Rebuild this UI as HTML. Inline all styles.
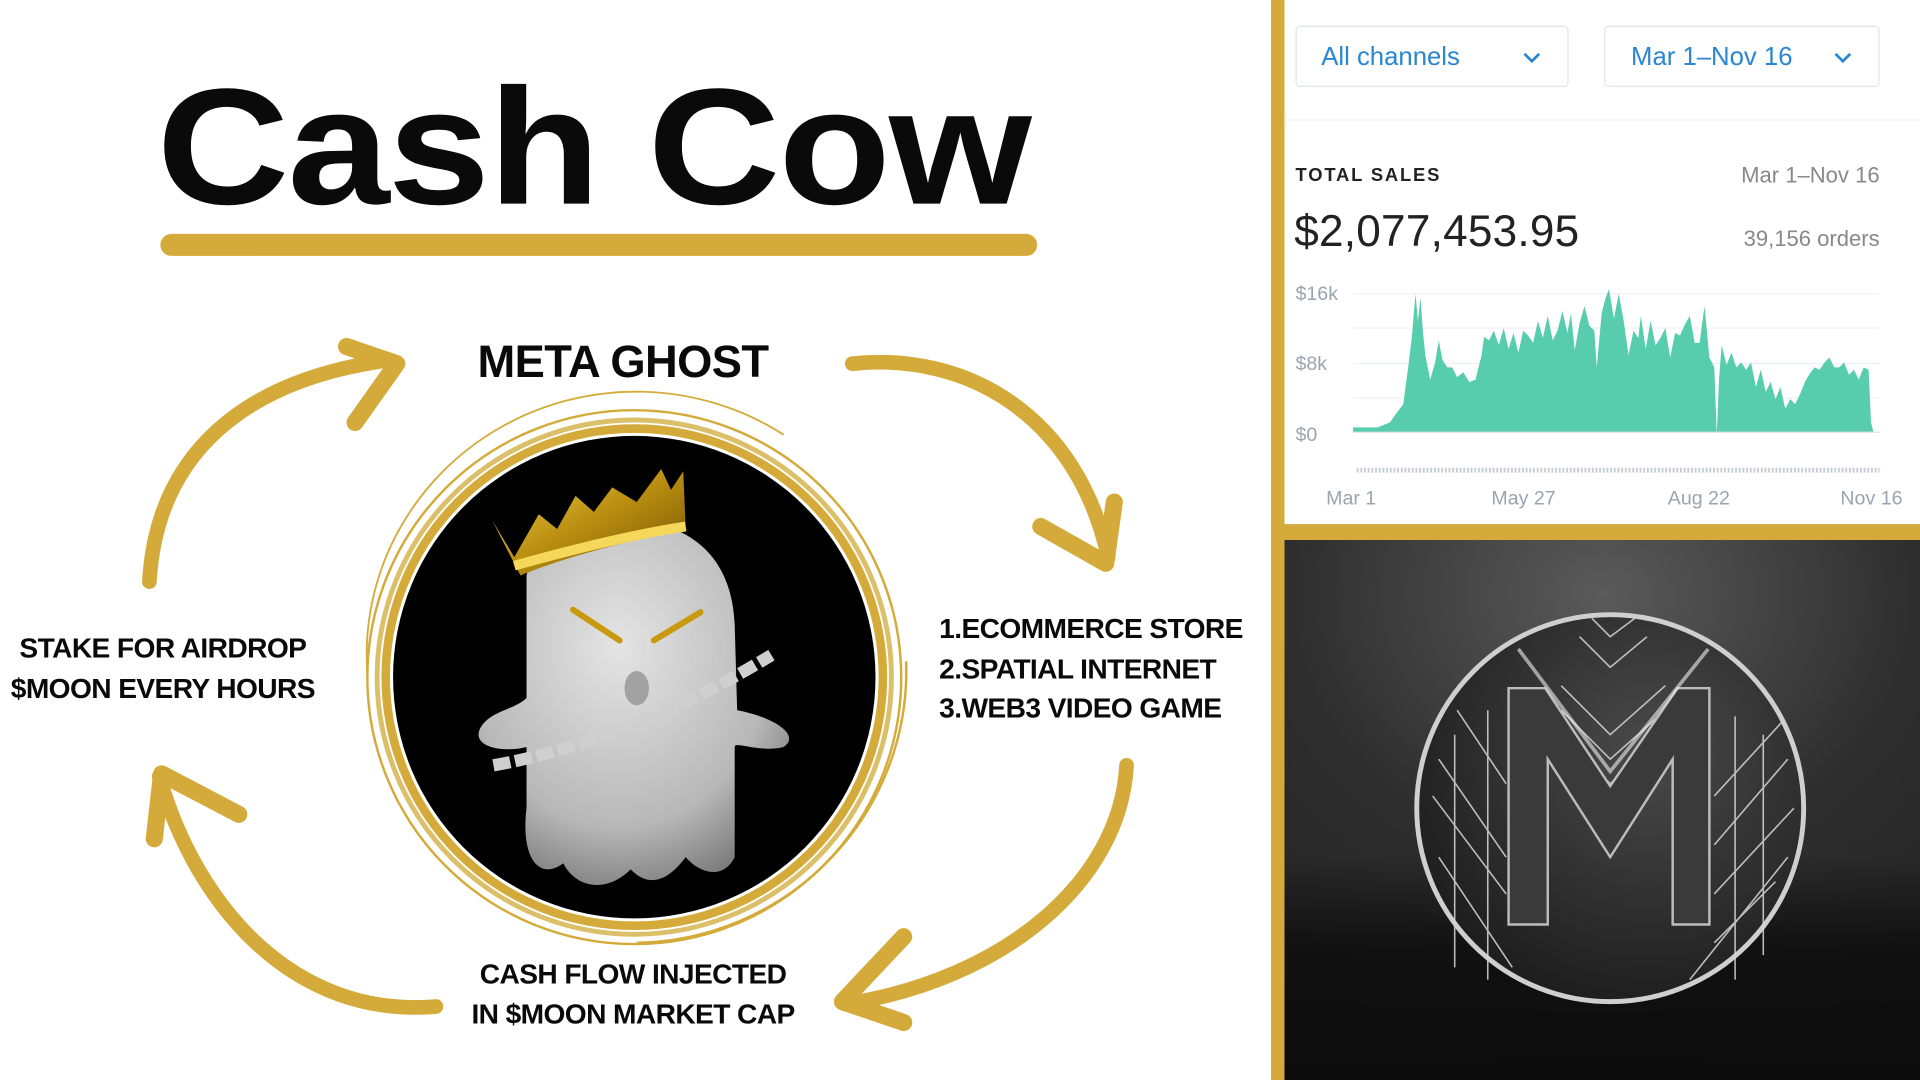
<!DOCTYPE html>
<html><head><meta charset="utf-8"><style>
html,body{margin:0;padding:0;background:#fff;overflow:hidden}
#w{width:1568px;height:882px;position:relative;transform:scale(1.22449);transform-origin:0 0;font-family:"Liberation Sans",sans-serif}
.t{position:absolute;font-weight:900;color:#0a0a0a;white-space:nowrap;letter-spacing:-0.5px}
</style></head><body><div id="w">
<svg width="1568" height="882" style="position:absolute;left:0;top:0">
<defs>
<radialGradient id="bg" cx="0.5" cy="0.1" r="0.9"><stop offset="0" stop-color="#5a5a5a"/><stop offset="0.55" stop-color="#2e2e2e"/><stop offset="1" stop-color="#222"/></radialGradient>
<linearGradient id="fl" x1="0" y1="0" x2="0" y2="1"><stop offset="0" stop-color="#0c0c0c" stop-opacity="0"/><stop offset="0.4" stop-color="#0c0c0c" stop-opacity="0.8"/><stop offset="1" stop-color="#0c0c0c" stop-opacity="1"/></linearGradient>
<radialGradient id="coin" cx="0.6" cy="0.35" r="0.7"><stop offset="0" stop-color="#4a4a4a"/><stop offset="1" stop-color="#1c1c1c"/></radialGradient>
<radialGradient id="gh" cx="0.45" cy="0.35" r="0.7"><stop offset="0" stop-color="#e4e4e4"/><stop offset="0.7" stop-color="#b8b8b8"/><stop offset="1" stop-color="#7a7a7a"/></radialGradient>
<linearGradient id="cr" x1="0" y1="0" x2="1" y2="1"><stop offset="0" stop-color="#f2d34a"/><stop offset="0.5" stop-color="#b98d10"/><stop offset="1" stop-color="#6e5205"/></linearGradient>
<clipPath id="cc"><circle cx="518" cy="553" r="196"/></clipPath>
</defs>
<rect x="1038" y="0" width="11" height="882" fill="#d4ab3a"/>
<rect x="1049" y="428" width="519" height="13" fill="#d4ab3a"/>
<rect x="1049" y="441" width="519" height="441" fill="url(#bg)"/>
<rect x="1049" y="700" width="519" height="182" fill="url(#fl)"/>
<line x1="1049" y1="98" x2="1568" y2="98" stroke="#eceff2"/>
<rect x="1058.5" y="21.5" width="222" height="49" rx="3" fill="#fff" stroke="#e2e6ea"/>
<rect x="1310.5" y="21.5" width="224" height="49" rx="3" fill="#fff" stroke="#e2e6ea"/>
<path d="M1245 44 l6 6 l6 -6 M1499 44 l6 6 l6 -6" stroke="#2a86d0" stroke-width="2.2" fill="none"/>
<g stroke="#eef1f3"><line x1="1105" y1="240" x2="1535" y2="240"/><line x1="1105" y1="268" x2="1535" y2="268"/><line x1="1105" y1="297" x2="1535" y2="297"/><line x1="1105" y1="325" x2="1535" y2="325"/></g>
<polygon fill="#57cdad" points="1105,353 1105,349 1125,349 1135,345 1140,338 1146,330 1150,300 1153,275 1156,240 1158,262 1160,243 1162,270 1164,290 1168,310 1172,296 1175,278 1178,294 1182,300 1186,300 1190,308 1195,304 1200,312 1205,310 1210,290 1212,275 1216,278 1220,270 1224,282 1228,268 1232,285 1236,272 1240,288 1244,270 1248,274 1252,280 1256,262 1260,276 1264,258 1268,278 1272,270 1276,254 1280,272 1283,256 1286,286 1290,264 1294,250 1298,266 1302,270 1304,300 1308,256 1311,244 1314,236 1318,260 1322,240 1326,262 1330,290 1334,270 1338,276 1340,258 1344,285 1348,262 1352,282 1356,276 1360,268 1364,292 1368,272 1372,274 1376,265 1380,258 1384,280 1388,280 1392,250 1396,292 1400,300 1402,355 1404,308 1406,282 1410,298 1414,288 1418,300 1422,296 1426,302 1430,296 1434,316 1438,302 1442,320 1446,312 1450,326 1454,316 1458,334 1462,326 1466,330 1470,322 1474,312 1478,305 1482,300 1486,302 1490,296 1494,292 1498,300 1502,300 1506,296 1510,306 1514,302 1518,310 1522,300 1526,302 1528,345 1530,353"/>
<line x1="1105" y1="353" x2="1535" y2="353" stroke="#dde2e6"/>
<line x1="1108" y1="384" x2="1535" y2="384" stroke="#c5ccd3" stroke-width="4" stroke-dasharray="1.5 1.5"/>
<ellipse cx="1315" cy="660" rx="158" ry="158" fill="url(#coin)" stroke="#cfcfcf" stroke-width="4"/>
<g stroke="#d8d8d8" stroke-width="1.3" fill="none" opacity="0.85">
<path d="M1188 600 L1188 790 M1215 580 L1215 800 M1417 585 L1417 800 M1440 600 L1440 780"/>
<path d="M1170 650 L1230 730 M1175 620 L1230 700 M1175 700 L1235 790 M1190 580 L1230 640"/>
<path d="M1400 650 L1455 590 M1400 690 L1460 620 M1400 730 L1465 660 M1400 770 L1450 720 M1380 800 L1460 700"/>
<path d="M1275 560 L1315 600 L1360 560 M1275 580 L1315 620 L1360 580 M1275 600 L1315 640 L1360 600 M1275 620 L1315 660 L1360 620 M1290 520 L1315 545 L1345 520 M1300 505 L1315 520 L1335 505"/>
</g>
<path d="M1232 562 L1262 562 L1315 642 L1370 562 L1396 562 L1396 755 L1366 755 L1366 620 L1315 700 L1264 620 L1264 755 L1232 755 Z" fill="#3a3a3a" stroke="#bcbcbc" stroke-width="2"/>
<path d="M1240 530 L1315 630 L1395 530" stroke="#eee" stroke-width="3" fill="none" opacity="0.6"/>
<path d="M140 200 L838 200" stroke="#d4ab3a" stroke-width="18" stroke-linecap="round"/>
<g fill="none" stroke="#d4ab3a">
<circle cx="518" cy="553" r="203" stroke-width="7"/>
<circle cx="518" cy="553" r="210" stroke-width="4" stroke="#dcc069"/>
<circle cx="518" cy="553" r="218" stroke-width="2"/>
<path d="M300 550 A220 215 0 0 1 640 355" stroke-width="1.5"/>
<path d="M740 540 A224 222 0 0 1 520 770" stroke-width="2"/>
</g>
<circle cx="518" cy="553" r="197" fill="#000"/>
<g clip-path="url(#cc)">
<path d="M430 470 C440 430 490 420 520 425 C570 430 598 460 600 510 L602 580 C630 585 655 600 640 610 C620 615 600 605 600 610 L600 700 C590 720 570 712 560 700 C545 720 530 725 515 710 C495 730 470 725 460 705 C440 720 425 700 430 660 L430 610 C410 615 385 610 392 595 C400 580 420 580 430 570 Z" fill="url(#gh)"/>
<path d="M402 425 L420 455 L440 420 L455 432 L470 405 L485 418 L500 398 L520 410 L540 383 L548 400 L558 385 L560 432 C520 440 460 455 425 470 Z" fill="url(#cr)"/>
<path d="M420 462 C470 448 520 436 560 430" stroke="#f5d85a" stroke-width="8"/>
<path d="M468 498 L506 523 M572 500 L534 523" stroke="#c99a10" stroke-width="5" stroke-linecap="round"/>
<ellipse cx="520" cy="562" rx="10" ry="14" fill="#8a8a8a" opacity="0.7"/>
<path d="M403 625 C460 615 540 590 630 535" stroke="#cfcfcf" stroke-width="10" stroke-dasharray="14 4" fill="none"/>
</g>
<g fill="none" stroke="#d4ab3a" stroke-linecap="round" stroke-linejoin="round">
<path d="M122 475 C128 370 200 310 318 294" stroke-width="12"/>
<path d="M283 283 L324 297 L290 345" stroke-width="14"/>
<path d="M696 297 C790 287 880 340 905 455" stroke-width="12"/>
<path d="M850 430 L903 460 L910 410" stroke-width="14"/>
<path d="M920 625 C915 720 820 800 690 820" stroke-width="12"/>
<path d="M738 765 L688 818 L738 835" stroke-width="14"/>
<path d="M356 822 C240 832 160 740 130 634" stroke-width="12"/>
<path d="M126 685 L132 632 L195 665" stroke-width="14"/>
</g>
</svg>
<div class="t" style="left:128px;top:26px;font-size:150px;letter-spacing:-1.5px;line-height:170px;transform:scaleY(0.9);transform-origin:0 100%">Cash Cow</div>
<div class="t" style="left:390px;top:275px;font-size:37px">META GHOST</div>
<div class="t" style="left:767px;top:497px;font-size:23px;line-height:32.5px">1.ECOMMERCE STORE<br>2.SPATIAL INTERNET<br>3.WEB3 VIDEO GAME</div>
<div class="t" style="left:0;width:266px;text-align:center;top:513px;font-size:23px;line-height:32.5px">STAKE FOR AIRDROP<br>$MOON EVERY HOURS</div>
<div class="t" style="left:370px;width:294px;text-align:center;top:779px;font-size:23px;line-height:32.5px">CASH FLOW INJECTED<br>IN $MOON MARKET CAP</div>
<div style="position:absolute;left:1079px;top:35px;font-size:21px;color:#2a86d0">All channels</div>
<div style="position:absolute;left:1332px;top:35px;font-size:21px;color:#2a86d0">Mar 1–Nov 16</div>
<div style="position:absolute;left:1058px;top:135px;font-size:15px;font-weight:bold;letter-spacing:1.5px;color:#222">TOTAL SALES</div>
<div style="position:absolute;right:33px;top:133px;font-size:18px;color:#888">Mar 1–Nov 16</div>
<div style="position:absolute;left:1057px;top:168px;font-size:36px;color:#222;letter-spacing:0.2px">$2,077,453.95</div>
<div style="position:absolute;right:33px;top:185px;font-size:18px;color:#888">39,156 orders</div>
<div style="position:absolute;left:1058px;top:232px;font-size:16px;color:#9aa4ae">$16k</div>
<div style="position:absolute;left:1058px;top:289px;font-size:16px;color:#9aa4ae">$8k</div>
<div style="position:absolute;left:1058px;top:347px;font-size:16px;color:#9aa4ae">$0</div>
<div style="position:absolute;left:1083px;top:399px;font-size:16px;color:#9aa4ae">Mar 1</div>
<div style="position:absolute;left:1218px;top:399px;font-size:16px;color:#9aa4ae">May 27</div>
<div style="position:absolute;left:1362px;top:399px;font-size:16px;color:#9aa4ae">Aug 22</div>
<div style="position:absolute;left:1503px;top:399px;font-size:16px;color:#9aa4ae">Nov 16</div>
</div></body></html>
